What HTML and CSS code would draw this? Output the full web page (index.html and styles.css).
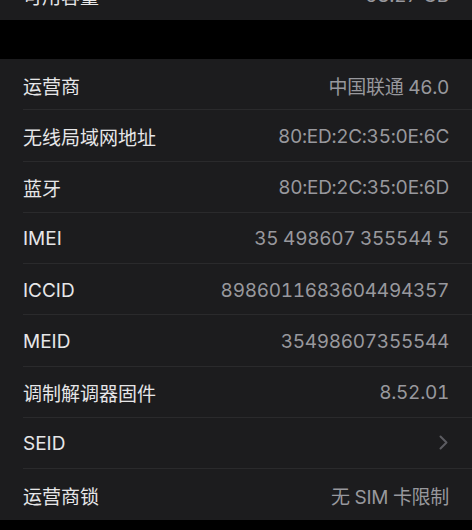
FILE: index.html
```html
<!DOCTYPE html>
<html>
<head>
  <meta http-equiv="Content-type" content="text/html; charset=utf-8">
  <title>关于本机</title>
  <link rel="stylesheet" href="styles.css">
</head>
<body>
  <div class="group group-top">
    <div class="row last">
      <div class="row-inner">
        <span class="label">可用容量</span>
        <span class="value">58.27 GB</span>
      </div>
    </div>
  </div>

  <div class="group">
    <div class="row">
      <div class="row-inner">
        <span class="label">运营商</span>
        <span class="value">中国联通 46.0</span>
      </div>
    </div>
    <div class="row">
      <div class="row-inner">
        <span class="label">无线局域网地址</span>
        <span class="value">80:ED:2C:35:0E:6C</span>
      </div>
    </div>
    <div class="row">
      <div class="row-inner">
        <span class="label">蓝牙</span>
        <span class="value">80:ED:2C:35:0E:6D</span>
      </div>
    </div>
    <div class="row">
      <div class="row-inner">
        <span class="label">IMEI</span>
        <span class="value">35 498607 355544 5</span>
      </div>
    </div>
    <div class="row">
      <div class="row-inner">
        <span class="label">ICCID</span>
        <span class="value">8986011683604494357</span>
      </div>
    </div>
    <div class="row">
      <div class="row-inner">
        <span class="label">MEID</span>
        <span class="value">35498607355544</span>
      </div>
    </div>
    <div class="row">
      <div class="row-inner">
        <span class="label">调制解调器固件</span>
        <span class="value">8.52.01</span>
      </div>
    </div>
    <div class="row">
      <div class="row-inner">
        <span class="label">SEID</span>
        <svg class="chevron" width="9" height="15" viewBox="0 0 9 15">
          <path d="M1.5 1.5l6 6-6 6" fill="none" stroke="#5c5c61" stroke-width="2" stroke-linecap="round" stroke-linejoin="round"/>
        </svg>
      </div>
    </div>
    <div class="row last">
      <div class="row-inner">
        <span class="label">运营商锁</span>
        <span class="value">无 SIM 卡限制</span>
      </div>
    </div>
  </div>
</body>
</html>
```

FILE: styles.css
```css
html, body {
  margin: 0;
  padding: 0;
  background: #000;
  height: 530px;
  overflow: hidden;
}

body {
  font-family: "Inter", "Noto Sans CJK SC", sans-serif;
  font-size: 19px;
  -webkit-font-smoothing: antialiased;
}

.group {
  background: #1c1c1e;
}

.group-top {
  margin-top: -31px;
  margin-bottom: 39px;
}

.row {
  padding-left: 23px;
}

.row-inner {
  height: 50.25px;
  display: flex;
  align-items: center;
  justify-content: space-between;
  padding-right: 23px;
  border-bottom: 1px solid #2a2a2c;
}

.row.last .row-inner {
  border-bottom: none;
  height: 51px;
}

.label {
  color: #e6e6e8;
  padding-top: 2px;
}

.value {
  color: #98989d;
  padding-top: 2px;
  letter-spacing: -0.3px;
  font-feature-settings: "tnum";
}

.chevron {
  display: block;
  margin-right: 1px;
}
```
